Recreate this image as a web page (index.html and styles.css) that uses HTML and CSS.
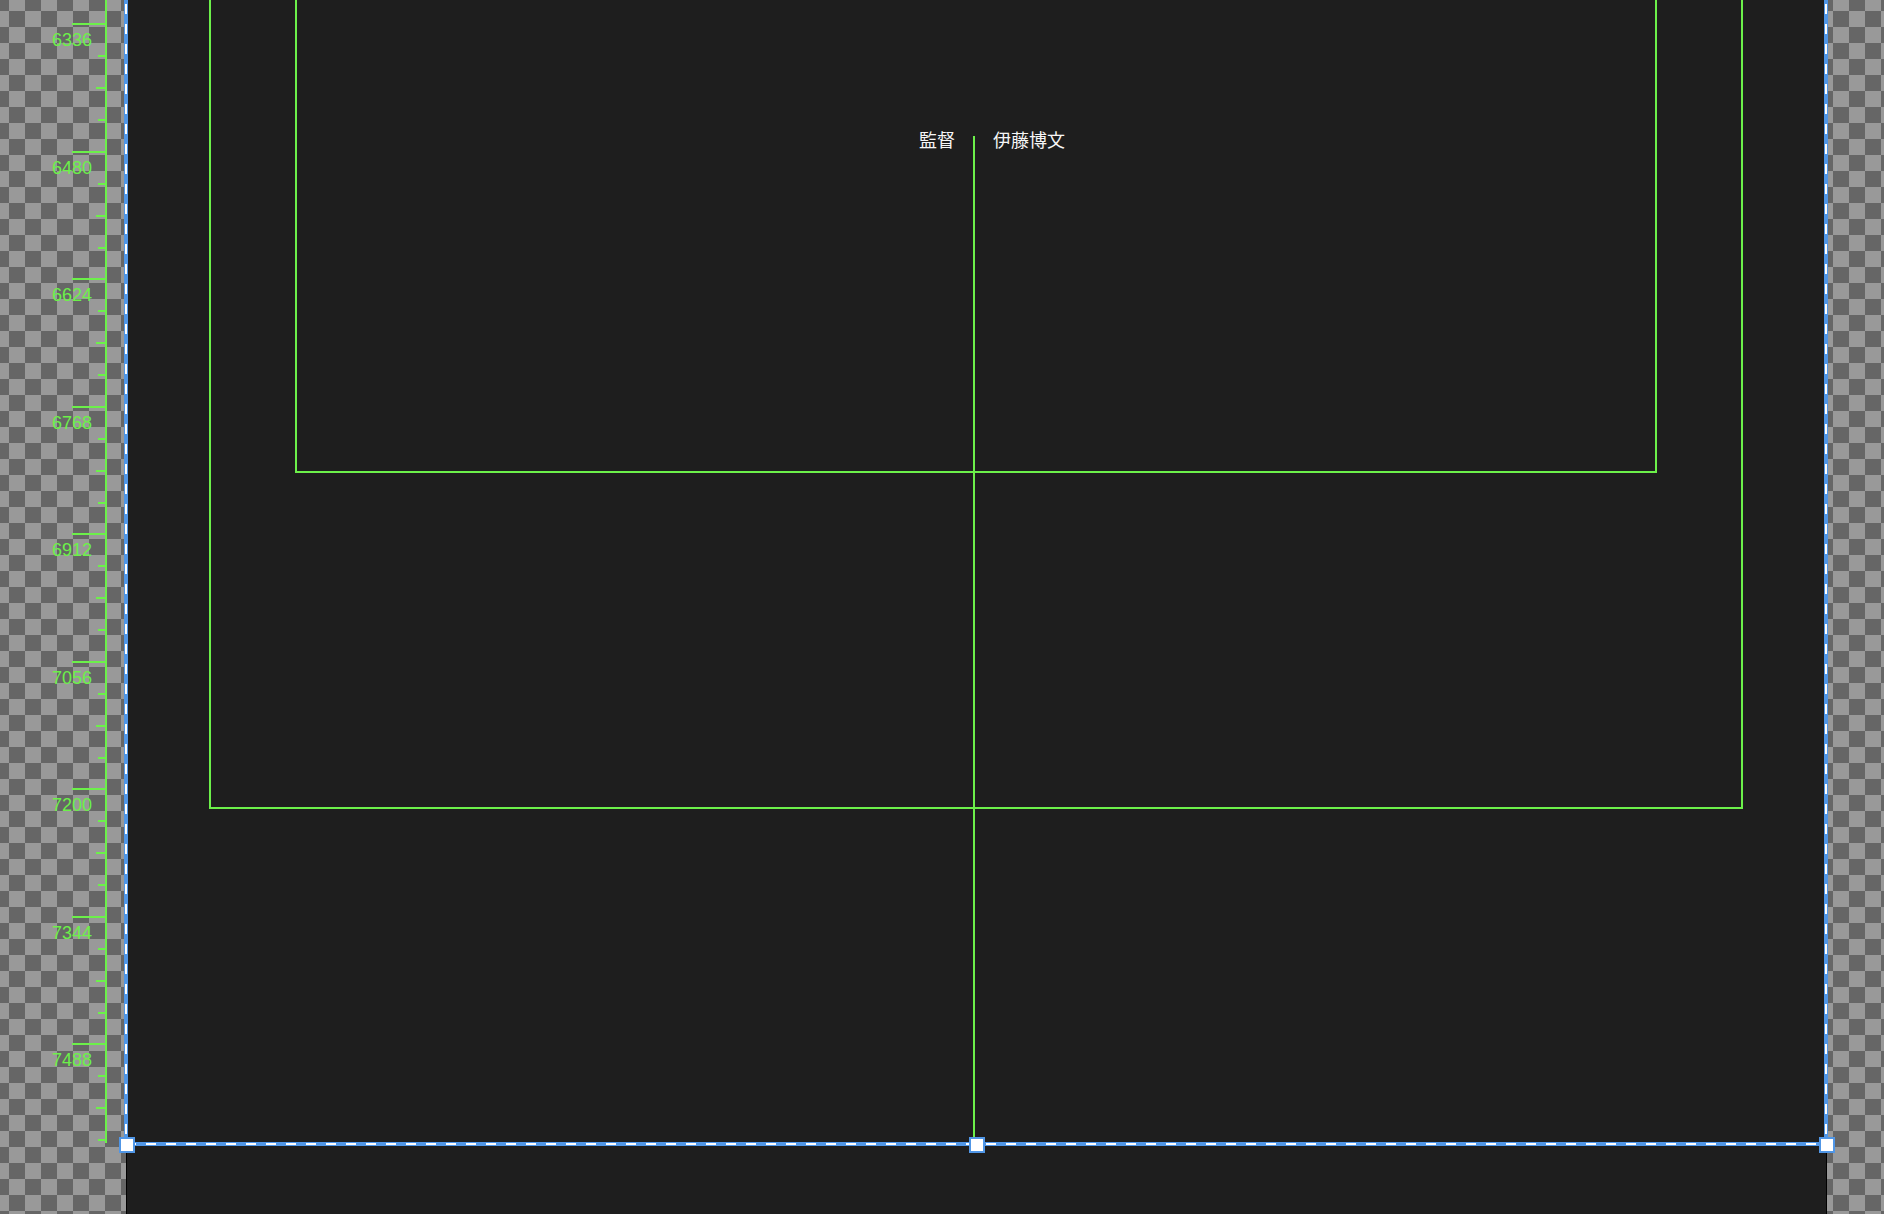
FILE: index.html
```html
<!DOCTYPE html>
<html lang="ja">
<head>
<meta charset="utf-8">
<title>Canvas</title>
<link rel="stylesheet" href="styles.css">
</head>
<body>
<div class="workspace">
  <div class="ruler">
    <div class="seg seg-first s127"></div>
    <div class="seg s128"><span class="lbl">6336</span></div>
    <div class="seg s127"><span class="lbl">6480</span></div>
    <div class="seg s128"><span class="lbl">6624</span></div>
    <div class="seg s127"><span class="lbl">6768</span></div>
    <div class="seg s128"><span class="lbl">6912</span></div>
    <div class="seg s127"><span class="lbl">7056</span></div>
    <div class="seg s128"><span class="lbl">7200</span></div>
    <div class="seg s127"><span class="lbl">7344</span></div>
    <div class="seg s128"><span class="lbl">7488</span></div>
  </div>

  <div class="frame">
    <div class="outer">
      <div class="inner"></div>
    </div>
    <div class="credit">
      <span class="role">監督</span>
      <span class="stem"></span>
      <span class="name">伊藤博文</span>
    </div>
  </div>

  <div class="sel">
    <div class="band band-l"></div>
    <div class="band band-r"></div>
    <div class="band band-b"></div>
    <div class="handle h-l"></div>
    <div class="handle h-m"></div>
    <div class="handle h-r"></div>
  </div>
</div>
</body>
</html>
```

FILE: styles.css
```css
html, body {
  margin: 0;
  padding: 0;
  width: 1884px;
  height: 1214px;
  overflow: hidden;
}

body {
  background-color: #999999;
  background-image: conic-gradient(#666666 25%, #999999 0 50%, #666666 0 75%, #999999 0);
  background-size: 32px 32px;
  background-position: -7px -21px;
  font-family: "Liberation Sans", Arial, sans-serif;
}

.workspace {
  position: relative;
  display: flex;
  align-items: flex-start;
  height: 1214px;
}

/* ---------- ruler ---------- */
.ruler {
  width: 105px;
  height: 1143px;
  border-right: 2px solid #6cf04a;
  overflow: hidden;
  flex: none;
}

.seg {
  box-sizing: border-box;
  padding-top: 8px;
  padding-right: 13px;
  text-align: right;
  background:
    linear-gradient(#6cf04a, #6cf04a) right 0 top 0 / 33px 2px no-repeat,
    linear-gradient(#6cf04a, #6cf04a) right 0 top 32px / 7px 2px no-repeat,
    linear-gradient(#6cf04a, #6cf04a) right 0 top 64px / 9px 2px no-repeat,
    linear-gradient(#6cf04a, #6cf04a) right 0 top 96px / 7px 2px no-repeat;
}

.s128 { height: 128px; }
.s127 { height: 127px; }
.seg-first { margin-top: -104px; }

.lbl {
  display: block;
  font-size: 18px;
  line-height: 18px;
  color: #6cf04a;
}

/* ---------- frame ---------- */
.frame {
  position: relative;
  flex: none;
  box-sizing: border-box;
  width: 1701px;
  height: 1214px;
  margin-left: 19px;
  padding: 0 83px 0 82px;
  background: #1e1e1e;
  border-left: 1px solid #000000;
  border-right: 1px solid #000000;
}

.outer {
  border: 2px solid #6cf04a;
  border-top: none;
  padding: 0 84px 334px;
}

.inner {
  box-sizing: border-box;
  height: 473px;
  border: 2px solid #6cf04a;
  border-top: none;
}

.credit {
  position: absolute;
  top: 130px;
  left: 0;
  right: 0;
  display: grid;
  grid-template-columns: 846px 2px 1fr;
  align-items: start;
  font-family: "Noto Sans CJK JP", "Noto Sans CJK SC", sans-serif;
  font-size: 18px;
  line-height: 18px;
  color: #f6f6f6;
}

.role {
  justify-self: end;
  margin-right: 18px;
}

.name {
  justify-self: start;
  margin-left: 18px;
}

.stem {
  display: block;
  width: 2px;
  height: 1001px;
  margin-top: 6px;
  background: #6cf04a;
}

/* ---------- selection ---------- */
.sel {
  position: absolute;
  left: 124px;
  top: 0;
  width: 1704px;
  height: 1146px;
  pointer-events: none;
}

.band {
  position: absolute;
  background-color: #5096e6;
  background-repeat: no-repeat;
}

.band-l, .band-r {
  top: 0;
  bottom: 0;
  width: 4px;
  background-image: repeating-linear-gradient(to bottom, #ffffff 0 10px, transparent 10px 20px);
  background-size: 2px 100%;
  background-position: 1px 4px;
}

.band-l { left: 0; }
.band-r { right: 0; }

.band-b {
  left: 0;
  right: 0;
  bottom: 0;
  height: 4px;
  background-image: repeating-linear-gradient(to right, #ffffff 0 10px, transparent 10px 20px);
  background-size: 100% 2px;
  background-position: 2px 1px;
}

.handle {
  position: absolute;
  top: 1137px;
  box-sizing: border-box;
  width: 16px;
  height: 16px;
  background: #ffffff;
  border: 2px solid #5096e6;
}

.h-l { left: -5px; }
.h-m { left: 845px; }
.h-r { left: 1695px; }
```
